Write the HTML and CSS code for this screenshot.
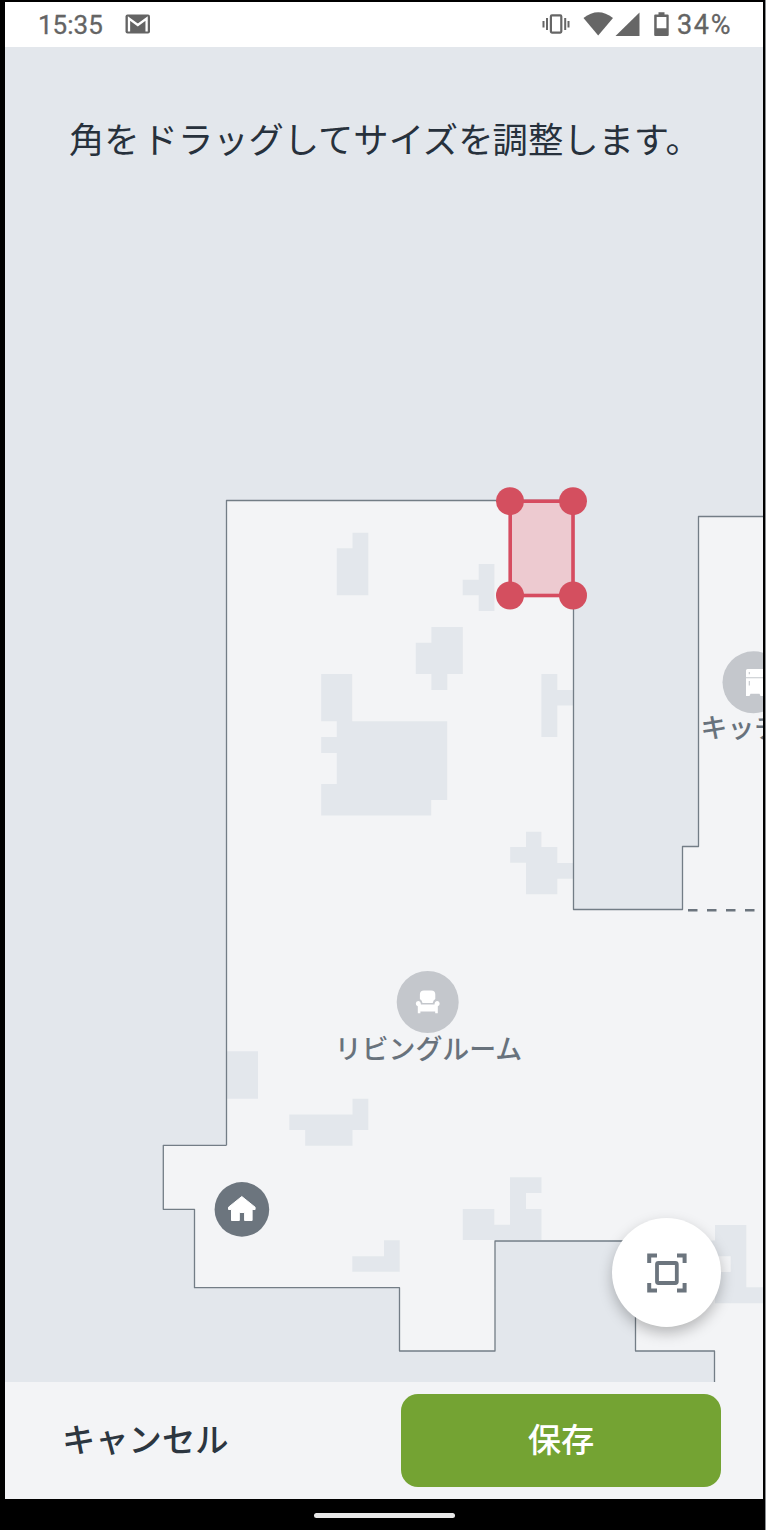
FILE: index.html
```html
<!DOCTYPE html>
<html lang="ja">
<head>
<meta charset="utf-8">
<title>サイズ調整</title>
<link rel="stylesheet" href="styles.css">
</head>
<body>
<div class="device">
  <header class="status">
    <span class="clock">15:35</span>
    <svg class="mail" width="26" height="20" viewBox="0 0 26 20"><rect x="0.500" y="0.500" width="24.500" height="19" rx="2" fill="#646464"/><path d="M4 17.500V4.500L12.800 11l8.800-6.500V17.500" fill="none" stroke="#fff" stroke-width="2.300"/></svg>
    <svg class="signals" width="130" height="28" viewBox="540 10 130 28" fill="#666">
      <rect x="550.900" y="14.400" width="10.400" height="17.200" rx="1" fill="none" stroke="#666" stroke-width="2.200"/>
      <path d="M546 17h2v12h-2zM542.500 20h2v6.500h-2zM564.200 17h2v12h-2zM567.500 20h2v6.500h-2z"/>
      <path d="M583.500 17Q598.200 5.500 613 17L598.200 34.500z"/>
      <path d="M639.500 11.500V35H615.500z"/>
      <path d="M658.500 11.300h6v2.200h3.200q1 0 1 1V34q0 1-1 1h-12.500q-1 0-1-1V14.500q0-1 1-1h3.300zM656.700 16v11.300h9.700V16z" fill-rule="evenodd"/>
    </svg>
    <span class="percent">34%</span>
  </header>
  <main class="map">
    <h1 class="hint">角を<span class="kana">ドラッグしてサイズを</span>調整します。</h1>
    <svg class="plan" width="758" height="1335" viewBox="5 47 758 1335">
      <path class="floor" d="M226.500 500.500H573.500V909.500H682.500V846.500H698.500V516.500H780V1400H714.500V1351H635.500V1241H495V1351H399.500V1287.700H194.500V1209.300H163V1145.300H226.500Z"/>
      <g class="blocked">
        <path d="M352.500 532.700h15.800v62.600h-31.500v-47.100h15.700z"/>
        <path d="M478.700 564h15.700v47h-15.700v-15.700h-16v-15.600h16z"/>
        <path d="M431.400 627h31.400v67-20h-15.500v16h-15.900v-16h-15.600v-31.200h15.600z"/>
        <path d="M321.200 674h31v47.200h95v78.800h-16v15.500h-110V784h15.600v-31h-15.600v-16h15.600v-15.700h-15.600z"/>
        <path d="M541.400 674h15.900v16h16v15.500h-16V737h-15.900z"/>
        <path d="M526 831.700h15.400V847h15.900v16h16v15.700h-16V894.200H526v-31.400h-15.800V847H526z"/>
        <path d="M227 1051.300h31v47.400h-31z"/>
        <path d="M352.500 1098.700h15.800v31.300h-15.800v15.800h-47.300V1130h-15.900v-15.500h63.200z"/>
        <path d="M384 1240.300h15.700v31.400h-47.400v-15.400H384z"/>
        <path d="M510 1177.300h31.500v15.700H526v16h15.500v31h-78.700v-31h31.500v15.700H510z"/>
        <path d="M699 1240.500h16V1225h31.300v62.300H770v16h-55V1272h15.700v-15.700H699z"/>
      </g>
      <path class="wall" d="M226.500 1145.300V500.500H573.500V909.500H682.500V846.500H698.500V516.500H780M714.500 1400V1351H635.500V1241H495V1351H399.500V1287.700H194.500V1209.300H163.300V1145.300H226.500"/>
      <path class="door" d="M688 910.200H766"/>
      <g class="zone">
        <rect x="510.200" y="501.200" width="62.800" height="94.300"/>
        <circle cx="510" cy="501.200" r="14"/><circle cx="573" cy="501.200" r="14"/>
        <circle cx="510" cy="595.500" r="14"/><circle cx="573" cy="595.500" r="14"/>
      </g>
      <circle class="pin" cx="427.700" cy="1002" r="31"/>
      <g fill="#fff">
        <path d="M424 990.500h7.300q4 0 4 4v4.500q-2 1-2.600 4h-10.200q-.600-3-2.600-4v-4.500q0-4 4.100-4z"/>
        <path d="M418.200 1001q2.600 0 2.700 3.500h13.600q.100-3.500 2.800-3.500 2.400.200 2.400 2.700 0 1.800-1.900 2.500v7h-2.600V1011.500h-14.800v1.700h-2.600v-7q-2-.700-2-2.500 0-2.500 2.400-2.700z"/>
      </g>
      <text class="room" x="334.800" y="1058.500">リビングルーム</text>
      <circle class="pin" cx="753.500" cy="682.300" r="31"/>
      <path fill="#fff" d="M746 670.500q0-1.500 1.500-1.500H763v27h-2.500l-1-2.300h-9l-1 2.300H746z"/>
      <path d="M746 677.700h17M749.300 672v2.200M749.300 681v4.500" fill="none" stroke="#c4c7cc" stroke-width="1.100"/>
      <text class="room" x="700.500" y="738">キッチ</text>
      <circle cx="241.900" cy="1209.400" r="27.300" fill="#6c757e"/>
      <path fill="#fff" stroke="#fff" stroke-width="1" stroke-linejoin="round" d="M241.800 1196.500l13.300 10.700v2.300h-3V1220.500h-7.500v-8h-5.300v8h-7.800v-11h-3v-2.300z"/>
    </svg>
    <button class="fit" aria-label="全体を表示">
      <svg width="40" height="40" viewBox="0 0 40 40" fill="none" stroke="#6c757e"><path stroke-width="4" d="M2.200 10V2.500H10M30 2.500H37.600V10M37.600 30V37.500H30M10 37.500H2.200V30"/><rect x="10" y="10" width="19.800" height="20" rx="1.500" stroke-width="3.800"/></svg>
    </button>
  </main>
  <footer class="actions">
    <button class="cancel">キャンセル</button>
    <button class="save">保存</button>
  </footer>
  <div class="nav"><span class="pill"></span></div>
</div>
</body>
</html>
```
FILE: styles.css
```css
* { box-sizing: border-box; }
body { margin: 0; background: #000; font-family: Roboto, "Noto Sans CJK JP", sans-serif; }
button { border: 0; padding: 0; font: inherit; }
.device { width: 766px; height: 1530px; padding: 2px 2px 0 5px; display: flex; flex-direction: column; overflow: hidden; background: #000; border-right: 1px solid #8b8e91; }
.status { height: 45px; flex: none; display: flex; align-items: center; background: #fff; color: #646464; font-size: 27px; }
.clock { width: 87px; margin-left: 33px; font-size: 26px; -webkit-text-stroke: .3px #646464; }
.mail { flex: none; margin-bottom: 2px; }
.signals { margin-left: auto; flex: none; }
.percent { width: 86px; margin-left: 7px; letter-spacing: 1.700px; -webkit-text-stroke: .3px #646464; }
.map { position: relative; height: 1335px; flex: none; overflow: hidden; background: #e3e7ec; }
.plan { display: block; }
.hint { position: absolute; top: 65px; left: 64px; margin: 0; font: 400 35.300px/52px "Noto Sans CJK JP", sans-serif; color: #27313c; white-space: nowrap; }
.kana { display: inline-block; width: 353px; text-indent: 3px; }
.floor { fill: #f3f4f6; }
.blocked { fill: #e3e7ec; }
.wall { fill: none; stroke: #737d86; stroke-width: 1.300; stroke-linejoin: round; }
.door { stroke: #6c757e; stroke-width: 2.600; stroke-dasharray: 9.500 9.500; }
.zone rect { fill: rgba(218, 74, 94, .25); stroke: #d64c60; stroke-width: 3.600; }
.zone circle { fill: #d44f5f; }
.pin { fill: #c4c7cc; }
.room { font: 500 26.900px "Noto Sans CJK JP", sans-serif; fill: #68727c; }
.fit { position: absolute; left: 607px; top: 1171px; width: 109.400px; height: 109.400px; border-radius: 50%; display: grid; place-items: center; background: #fff; box-shadow: 0 6px 14px rgba(0, 0, 0, .25); }
.actions { height: 117px; flex: none; display: flex; justify-content: space-between; align-items: center; padding: 0 42px 1px 57px; background: #f3f4f6; font-family: "Noto Sans CJK JP", sans-serif; font-weight: 500; font-size: 33.300px; }
.cancel { background: none; color: #2c3640; padding-bottom: 6px; }
.save { width: 320px; height: 93px; padding-bottom: 6px; border-radius: 17px; background: #74a333; color: #fff; }
.nav { flex: 1; display: flex; justify-content: center; align-items: center; padding-left: 1px; padding-top: 1px; }
.pill { width: 141px; height: 5px; border-radius: 3px; background: #e8e8e8; }
```
